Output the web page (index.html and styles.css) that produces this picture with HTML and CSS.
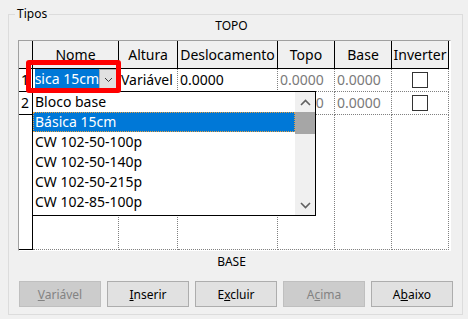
FILE: index.html
```html
<!DOCTYPE html>
<html>
<head>
<meta charset="utf-8">
<link rel="stylesheet" href="styles.css">
</head>
<body>
<div class="group">
  <span class="group-label">Tipos</span>
  <div class="title">TOPO</div>
  <div class="grid-wrap">
    <div class="grid">
      <div class="cell hd"></div>
      <div class="cell hd">Nome</div>
      <div class="cell hd">Altura</div>
      <div class="cell hd">Deslocamento</div>
      <div class="cell hd">Topo</div>
      <div class="cell hd">Base</div>
      <div class="cell hd">Inverter</div>

      <div class="cell rh">1</div>
      <div class="cell nome">
        <div class="combo">
          <div class="combo-text"><div class="combo-clip"><span class="combo-sel">Básica 15cm</span></div></div>
          <div class="combo-btn"><svg width="9" height="6" viewBox="0 0 9 6"><polyline points="1,1 4.5,4.5 8,1" fill="none" stroke="#3c3c3c" stroke-width="1"/></svg></div>
        </div>
      </div>
      <div class="cell">Variável</div>
      <div class="cell">0.0000</div>
      <div class="cell muted">0.0000</div>
      <div class="cell muted">0.0000</div>
      <div class="cell chk"><span class="box"></span></div>

      <div class="cell rh">2</div>
      <div class="cell"></div>
      <div class="cell"></div>
      <div class="cell"></div>
      <div class="cell muted">0.0000</div>
      <div class="cell muted">0.0000</div>
      <div class="cell chk"><span class="box"></span></div>

      <div class="cell rh"></div>
      <div class="cell"></div>
      <div class="cell"></div>
      <div class="cell"></div>
      <div class="cell"></div>
      <div class="cell"></div>
      <div class="cell"></div>
    </div>

    <div class="dropdown">
      <div class="list">
        <div class="item">Bloco base</div>
        <div class="item sel">Básica 15cm</div>
        <div class="item">CW 102-50-100p</div>
        <div class="item">CW 102-50-140p</div>
        <div class="item">CW 102-50-215p</div>
        <div class="item">CW 102-85-100p</div>
      </div>
      <div class="sb">
        <div class="sb-btn"><svg width="11" height="7" viewBox="0 0 11 7"><polyline points="1,6 5.5,1.5 10,6" fill="none" stroke="#606060" stroke-width="1.6"/></svg></div>
        <div class="sb-thumb"></div>
        <div class="sb-track"></div>
        <div class="sb-btn"><svg width="11" height="7" viewBox="0 0 11 7"><polyline points="1,1 5.5,5.5 10,1" fill="none" stroke="#606060" stroke-width="1.6"/></svg></div>
      </div>
    </div>

    <div class="callout"></div>
  </div>
  <div class="title base">BASE</div>
  <div class="buttons">
    <button class="btn" disabled><u>V</u>ariável</button>
    <button class="btn"><u>I</u>nserir</button>
    <button class="btn">E<u>x</u>cluir</button>
    <button class="btn" disabled>A<u>c</u>ima</button>
    <button class="btn">A<u>b</u>aixo</button>
  </div>
</div>
</body>
</html>
```

FILE: styles.css
```css
body {
  margin: 0;
  background: #f0f0f0;
  font-family: "Noto Sans", sans-serif;
  color: #000;
  width: 468px;
  height: 319px;
  overflow: hidden;
}

.group {
  position: relative;
  box-sizing: border-box;
  margin: 14px 0 0 8px;
  width: 455px;
  height: 301px;
  border: 1px solid #dcdcdc;
  padding: 0 0 0 9px;
}

.group-label {
  position: absolute;
  left: 6px;
  top: -9px;
  padding: 0 2px;
  background: #f0f0f0;
  font-size: 12px;
  line-height: 16px;
}

.title {
  width: 433px;
  box-sizing: border-box;
  padding-right: 6px;
  text-align: center;
  font-size: 12px;
  height: 25px;
  line-height: 22px;
}

.title.base {
  height: 30px;
}

.grid-wrap {
  position: relative;
  box-sizing: border-box;
  width: 433px;
  height: 211px;
  border-style: solid;
  border-width: 1px;
  border-color: #a0a0a0 #ffffff #ffffff #a0a0a0;
  background: #fff;
}

.grid {
  display: grid;
  grid-template-columns: 14px 86px 59px 100px 57px 57px 57px;
  grid-template-rows: 28px 23px 23px 135px;
  font-size: 14px;
}

.cell {
  box-sizing: border-box;
  border-right: 1px dotted #808080;
  border-bottom: 1px dotted #808080;
  padding-left: 2px;
  line-height: 22px;
  white-space: nowrap;
  overflow: hidden;
}

.hd {
  background: #f0f0f0;
  border-right: 1px solid #000;
  border-bottom: 1px solid #000;
  text-align: center;
  padding: 0;
  line-height: 27px;
}

.rh {
  border-right: 1px solid #000;
  border-bottom: 1px solid #000;
}

.muted {
  color: #7a7a7a;
}

.chk {
  display: flex;
  align-items: center;
  justify-content: center;
  padding: 0;
}

.box {
  width: 16px;
  height: 16px;
  box-sizing: border-box;
  border: 1px solid #333;
  background: #fff;
}

.nome {
  padding: 0;
}

.combo {
  display: flex;
  height: 22px;
}

.combo-text {
  flex: 1;
  min-width: 0;
  padding: 0 0 0 2px;
  background: #fff;
}

.combo-clip {
  display: flex;
  justify-content: flex-end;
  overflow: hidden;
  height: 20px;
}

.combo-sel {
  flex: none;
  background: #0078d7;
  color: #fff;
  line-height: 20px;
  white-space: nowrap;
}

.combo-btn {
  width: 19px;
  box-sizing: border-box;
  border: 1px solid #adadad;
  background: #e1e1e1;
  display: flex;
  align-items: center;
  justify-content: center;
}

.dropdown {
  position: absolute;
  left: 13px;
  top: 50px;
  width: 284px;
  height: 125px;
  box-sizing: border-box;
  border: 1px solid #000;
  background: #fff;
  display: flex;
  font-size: 14px;
}

.list {
  flex: 1;
}

.item {
  height: 20px;
  line-height: 20px;
  padding-left: 2px;
  white-space: nowrap;
}

.item.sel {
  background: #0078d7;
  color: #fff;
  outline: 1px dotted #e8a040;
  outline-offset: -1px;
}

.sb {
  width: 20px;
  background: #f0f0f0;
  display: flex;
  flex-direction: column;
}

.sb-btn {
  height: 20px;
  display: flex;
  align-items: center;
  justify-content: center;
}

.sb-thumb {
  height: 22px;
  background: #a6a6a6;
}

.sb-track {
  flex: 1;
}

.callout {
  position: absolute;
  left: 7px;
  top: 19px;
  width: 95px;
  height: 33px;
  box-sizing: border-box;
  border: 5px solid #ff0000;
  border-radius: 3px;
}

.buttons {
  display: flex;
  gap: 6px;
  padding-left: 1px;
}

.btn {
  width: 82px;
  height: 26px;
  box-sizing: border-box;
  border: 1px solid #adadad;
  background: #e1e1e1;
  font-family: "Noto Sans", sans-serif;
  font-size: 12px;
  color: #000;
  padding: 0;
}

.btn:disabled {
  background: #cccccc;
  border-color: #bfbfbf;
  color: #838383;
}
```
